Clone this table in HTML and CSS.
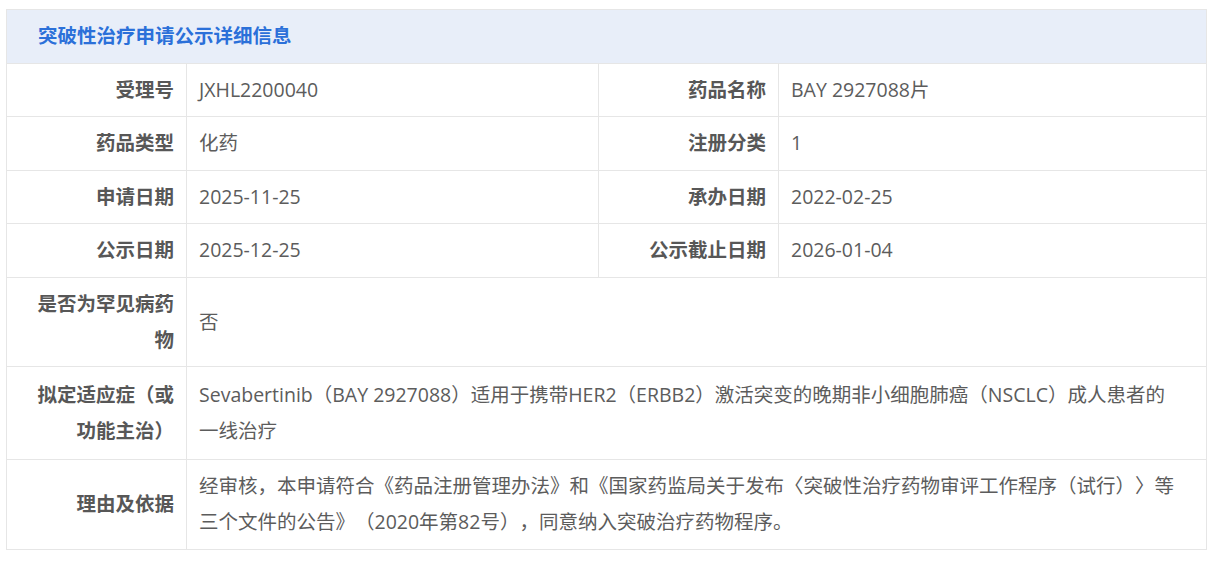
FILE: index.html
```html
<!DOCTYPE html>
<html lang="zh-CN">
<head>
<meta charset="utf-8">
<title>突破性治疗申请公示详细信息</title>
<link rel="stylesheet" href="styles.css">
</head>
<body>
<table class="detail">
  <colgroup>
    <col class="c-label">
    <col class="c-value1">
    <col class="c-label">
    <col class="c-value2">
  </colgroup>
  <thead>
    <tr><th colspan="4" class="cell title">突破性治疗申请公示详细信息</th></tr>
  </thead>
  <tbody>
    <tr>
      <th class="cell label">受理号</th><td class="cell value">JXHL2200040</td>
      <th class="cell label">药品名称</th><td class="cell value">BAY 2927088片</td>
    </tr>
    <tr>
      <th class="cell label">药品类型</th><td class="cell value">化药</td>
      <th class="cell label">注册分类</th><td class="cell value">1</td>
    </tr>
    <tr>
      <th class="cell label">申请日期</th><td class="cell value">2025-11-25</td>
      <th class="cell label">承办日期</th><td class="cell value">2022-02-25</td>
    </tr>
    <tr>
      <th class="cell label">公示日期</th><td class="cell value">2025-12-25</td>
      <th class="cell label">公示截止日期</th><td class="cell value">2026-01-04</td>
    </tr>
    <tr>
      <th class="cell label">是否为罕见病药物</th><td class="cell value wide" colspan="3">否</td>
    </tr>
    <tr class="tall">
      <th class="cell label">拟定适应症（或功能主治）</th><td class="cell value wide" colspan="3">Sevabertinib（BAY 2927088）适用于携带HER2（ERBB2）激活突变的晚期非小细胞肺癌（NSCLC）成人患者的一线治疗</td>
    </tr>
    <tr>
      <th class="cell label">理由及依据</th><td class="cell value wide" colspan="3">经审核，本申请符合《药品注册管理办法》和《国家药监局关于发布〈突破性治疗药物审评工作程序（试行）〉等三个文件的公告》（2020年第82号），同意纳入突破治疗药物程序。</td>
    </tr>
  </tbody>
</table>
</body>
</html>
```

FILE: styles.css
```css
html, body {
  background: #ffffff;
}
body {
  margin: 0;
  padding: 9px 9px 0 6px;
  font-family: "Open Sans", "Noto Sans CJK SC", sans-serif;
  font-size: 19.5px;
  color: #5c5c5c;
  text-spacing-trim: space-all;
}
.detail {
  width: 1200px;
  table-layout: fixed;
  border-collapse: collapse;
}
.c-label { width: 180px; }
.c-value1 { width: 412px; }
.c-value2 { width: 428px; }
.cell {
  border: 1px solid #e6e6e6;
  line-height: 36px;
  padding: 8.25px 12px;
  vertical-align: middle;
  text-spacing-trim: space-all;
}
.cell.title {
  background: #e8eef9;
  color: #2b70d9;
  font-weight: 700;
  text-align: left;
  padding-left: 31px;
}
.cell.label {
  text-align: right;
  font-weight: 700;
  color: #575757;
}
.cell.value {
  text-align: left;
  font-weight: 400;
  color: #5c5c5c;
}
.cell.wide {
  padding-right: 26px;
}
.tall .cell {
  padding-top: 10px;
  padding-bottom: 10px;
}
```
